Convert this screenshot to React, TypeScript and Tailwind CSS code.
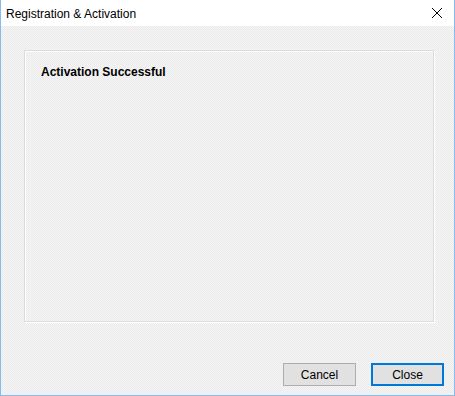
import React from "react";

export default function App() {
  return (
    <div
      className="w-[455px] h-[396px] flex flex-col border-x border-b border-[#84bcf0] bg-[#f0f0f0] text-black"
      style={{ fontFamily: "'Liberation Sans', Arial, sans-serif" }}
    >
      <div className="h-[26px] bg-white flex items-center justify-between pl-[5px] pr-[10px]">
        <span className="text-[12px] leading-none pt-[1px]">Registration &amp; Activation</span>
        <svg width="12" height="12" viewBox="0 0 12 12" className="mr-[1px]">
          <path d="M1 1L11 11M11 1L1 11" stroke="#000" strokeWidth="1" />
        </svg>
      </div>

      <div className="flex-1 flex flex-col bg-[repeating-conic-gradient(#ebebeb_0_25%,#f5f5f5_0_50%)] bg-[length:2px_2px]">
        <div className="mt-[24px] ml-[23px] w-[410px] h-[272px] border border-[#dcdcdc] shadow-[inset_1px_1px_0_#fff,1px_1px_0_#fff] pt-[14px] pl-[16px]">
          <div className="text-[12px] font-bold leading-[14px]">Activation Successful</div>
        </div>

        <div className="mt-[41px] flex justify-end gap-[15px] pr-[10px]">
          <button className="w-[73px] h-[23px] bg-[#e1e1e1] border border-[#adadad] text-[12px] leading-none">
            Cancel
          </button>
          <button className="w-[73px] h-[23px] bg-[#e1e1e1] border-2 border-[#0078d7] text-[12px] leading-none">
            Close
          </button>
        </div>
      </div>
    </div>
  );
}
